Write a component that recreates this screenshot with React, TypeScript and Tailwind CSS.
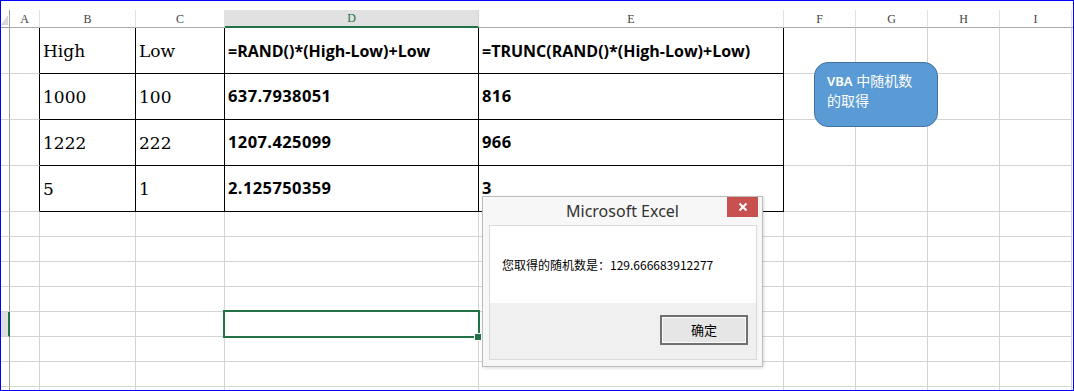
import React from "react";

const COLS = ["A", "B", "C", "D", "E", "F", "G", "H", "I"];
const serif = { fontFamily: '"DejaVu Serif", "Liberation Serif", serif' } as React.CSSProperties;

const tableRows: [string, string, string, string][] = [
  ["High", "Low", "=RAND()*(High-Low)+Low", "=TRUNC(RAND()*(High-Low)+Low)"],
  ["1000", "100", "637.7938051", "816"],
  ["1222", "222", "1207.425099", "966"],
  ["5", "1", "2.125750359", "3"],
];

export default function App() {
  const cells: React.ReactNode[] = [];
  cells.push(<div key="top" className="col-span-11 bg-white" />);
  cells.push(
    <div key="corner" className="relative border-r border-b border-[#9f9f9f] bg-white">
      <svg className="absolute left-0 top-[5px]" width="8" height="11" viewBox="0 0 8 11">
        <polygon points="7,0 7,10 0,10" fill="#d9d9d9" />
      </svg>
    </div>
  );
  COLS.forEach((c) => {
    const sel = c === "D";
    cells.push(
      <div
        key={"h" + c}
        className={
          "flex items-center justify-center text-[12px] leading-none border-r " +
          (sel
            ? "bg-[#e1e1e1] border-r-[#d4d4d4] border-b-2 border-b-[#217346] text-[#217346]"
            : "bg-white border-r-[#e0e0e0] border-b border-b-[#ababab] text-[#444]")
        }
        style={{ fontFamily: '"Liberation Serif", serif' }}
      >
        {c}
      </div>
    );
  });
  cells.push(<div key="hx" className="border-b border-[#ababab] bg-white" />);

  const totalRows = 4 + 7 + 1;
  for (let r = 0; r < totalRows; r++) {
    const inTable = r < 4;
    const selRow = r === 8;
    const last = r === totalRows - 1;
    cells.push(
      <div
        key={"rh" + r}
        className={
          (selRow ? "bg-[#e1e1e1] border-r-2 border-r-[#217346] " : "bg-white border-r border-r-[#9f9f9f] ") +
          (last ? "" : "border-b border-b-[#d4d4d4]")
        }
      />
    );
    COLS.forEach((c, ci) => {
      const tableCol = ci >= 1 && ci <= 4;
      let cls = "flex items-center overflow-hidden whitespace-nowrap bg-white ";
      if (inTable && (tableCol || ci === 0)) {
        cls += "border-r border-r-black ";
      } else {
        cls += "border-r border-r-[#d4d4d4] ";
      }
      if (!last) {
        cls += inTable && tableCol ? "border-b border-b-black " : "border-b border-b-[#d4d4d4] ";
      }
      let content: React.ReactNode = null;
      if (inTable && tableCol) {
        const txt = tableRows[r][ci - 1];
        if (ci <= 2) {
          content = (
            <span className="pl-[3px] pt-[2px] text-[17px] text-black" style={serif}>
              {txt}
            </span>
          );
        } else {
          content = (
            <span
              className={
                "pl-[3px] font-bold text-black " + (r === 0 ? "text-[16px]" : "text-[16.5px] tracking-[0.4px]")
              }
              style={{ fontFamily: '"Open Sans", "Noto Sans", sans-serif' }}
            >
              {txt}
            </span>
          );
        }
      }
      cells.push(
        <div key={"c" + r + c} className={cls}>
          {content}
        </div>
      );
    });
    cells.push(<div key={"x" + r} className="bg-white" />);
  }

  return (
    <div className="relative w-[1074px] h-[391px] overflow-hidden border border-[#0000ff] bg-white">
      <div className="grid grid-cols-[9px_30px_96px_89px_254px_305px_72px_72px_72px_72px_1px] grid-rows-[9px_18px_46px_46px_46px_46px_25px_25px_25px_25px_25px_25px_25px_3px]">
        {cells}
      </div>

      {/* selection box */}
      <div className="absolute left-[222px] top-[309px] w-[257px] h-[28px] border-2 border-[#217346]" />
      <div className="absolute left-[473px] top-[332px] w-[8px] h-[8px] bg-white p-[1px]">
        <div className="w-full h-full bg-[#217346]" />
      </div>

      {/* callout */}
      <div
        className="absolute left-[813px] top-[61px] w-[124px] h-[65px] rounded-[14px] border border-[#41719c] bg-[#5b9bd5] pl-[12px] pt-[8px] text-[14px] leading-[19px] text-white"
        style={{ fontFamily: '"Noto Sans", "Noto Sans CJK SC", sans-serif' }}
      >
        <div>
          <span className="font-semibold text-[13px]">VBA</span> 中随机数
        </div>
        <div>的取得</div>
      </div>

      {/* dialog */}
      <div className="absolute left-[481px] top-[195px] w-[281px] h-[171px] border border-[#bcbcbc] bg-[#f7f7f7] px-[6px] pb-[6px] shadow-[1px_1px_3px_rgba(0,0,0,0.15)] flex flex-col">
        <div
          className="h-[28px] flex items-center justify-center text-[16px] text-[#333]"
          style={{ fontFamily: '"Noto Sans", "Open Sans", sans-serif' }}
        >
          Microsoft Excel
        </div>
        <div className="absolute left-[244px] top-0 w-[31px] h-[20px] bg-[#c75050] flex items-center justify-center">
          <svg width="10" height="10" viewBox="0 0 10 10">
            <path d="M1.5 1.5 L8.5 8.5 M8.5 1.5 L1.5 8.5" stroke="white" strokeWidth="2" />
          </svg>
        </div>
        <div className="flex-1 border border-[#dadada] flex flex-col mr-[-1px]">
          <div
            className="h-[77px] bg-white flex items-center pl-[12px] text-[12px] text-black"
            style={{ fontFamily: '"Noto Sans CJK SC", "Noto Sans", sans-serif' }}
          >
            您取得的随机数是：129.666683912277
          </div>
          <div className="flex-1 bg-[#f0f0f0] flex justify-end items-start pt-[12px] pr-[8px]">
            <div
              className="w-[88px] h-[30px] border-2 border-[#707070] bg-[#e6e6e6] shadow-[inset_0_0_0_1px_#fafafa] flex items-center justify-center text-[13px] text-black"
              style={{ fontFamily: '"Noto Sans CJK SC", sans-serif' }}
            >
              确定
            </div>
          </div>
        </div>
      </div>
    </div>
  );
}
